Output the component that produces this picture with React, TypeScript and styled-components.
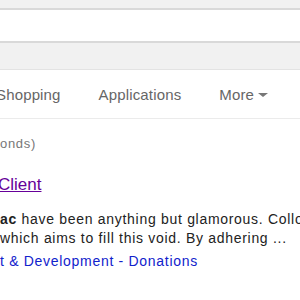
import React from "react";
import styled, { createGlobalStyle } from "styled-components";

const Global = createGlobalStyle`
  html, body { margin: 0; padding: 0; background: #fff; }
  body { font-family: "Liberation Sans", Arial, sans-serif; overflow: hidden; width: 300px; height: 300px; }
`;

const Page = styled.div`
  width: 300px;
  height: 300px;
  overflow: hidden;
  display: flex;
  flex-direction: column;
`;

const TopBar = styled.div`
  height: 8px;
  background: #f1f1f1;
  border-bottom: 2px solid #d9d9d9;
`;

const SearchField = styled.div`
  height: 31px;
  background: #fff;
  border-bottom: 2px solid #d9d9d9;
`;

const Toolbar = styled.div`
  height: 26px;
  background: #f1f1f1;
  border-bottom: 1px solid #e3e3e3;
`;

const Nav = styled.nav`
  display: flex;
  align-items: center;
  gap: 38px;
  height: 48px;
  margin-left: -4px;
  border-bottom: 1px solid #ebebeb;
  font-size: 15px;
  letter-spacing: 0.15px;
  color: #666;
`;

const NavItem = styled.span`
  display: inline-flex;
  align-items: center;
  gap: 4px;
  white-space: nowrap;
`;

const Caret = styled.span`
  width: 0;
  height: 0;
  border-left: 5px solid transparent;
  border-right: 5px solid transparent;
  border-top: 4px solid #777;
  margin-top: 1px;
`;

const Results = styled.div`
  display: flex;
  flex-direction: column;
  white-space: nowrap;
  letter-spacing: 0.7px;
`;

const Stats = styled.div`
  font-size: 13px;
  color: #777;
  margin-top: 17px;
  line-height: 16px;
`;

const Title = styled.a`
  font-size: 17px;
  color: #660099;
  text-decoration: underline;
  margin-top: 22px;
  margin-left: -2px;
  line-height: 22px;
  letter-spacing: 0;
`;

const Snippet = styled.div`
  font-size: 14px;
  color: #222;
  line-height: 19px;
  margin-top: 14px;
  b { color: #222; }
`;

const Links = styled.div`
  font-size: 14px;
  color: #1122cc;
  line-height: 19px;
  margin-top: 4px;
`;

export default function App() {
  return (
    <>
      <Global />
      <Page>
        <TopBar />
        <SearchField />
        <Toolbar />
        <Nav>
          <NavItem>Shopping</NavItem>
          <NavItem>Applications</NavItem>
          <NavItem>
            More <Caret />
          </NavItem>
        </Nav>
        <Results>
          <Stats>onds)</Stats>
          <Title href="#">Client</Title>
          <Snippet>
            <b>ac</b> have been anything but glamorous. Collo
            <br />
            which aims to fill this void. By adhering ...
          </Snippet>
          <Links>t &amp; Development - Donations</Links>
        </Results>
      </Page>
    </>
  );
}
